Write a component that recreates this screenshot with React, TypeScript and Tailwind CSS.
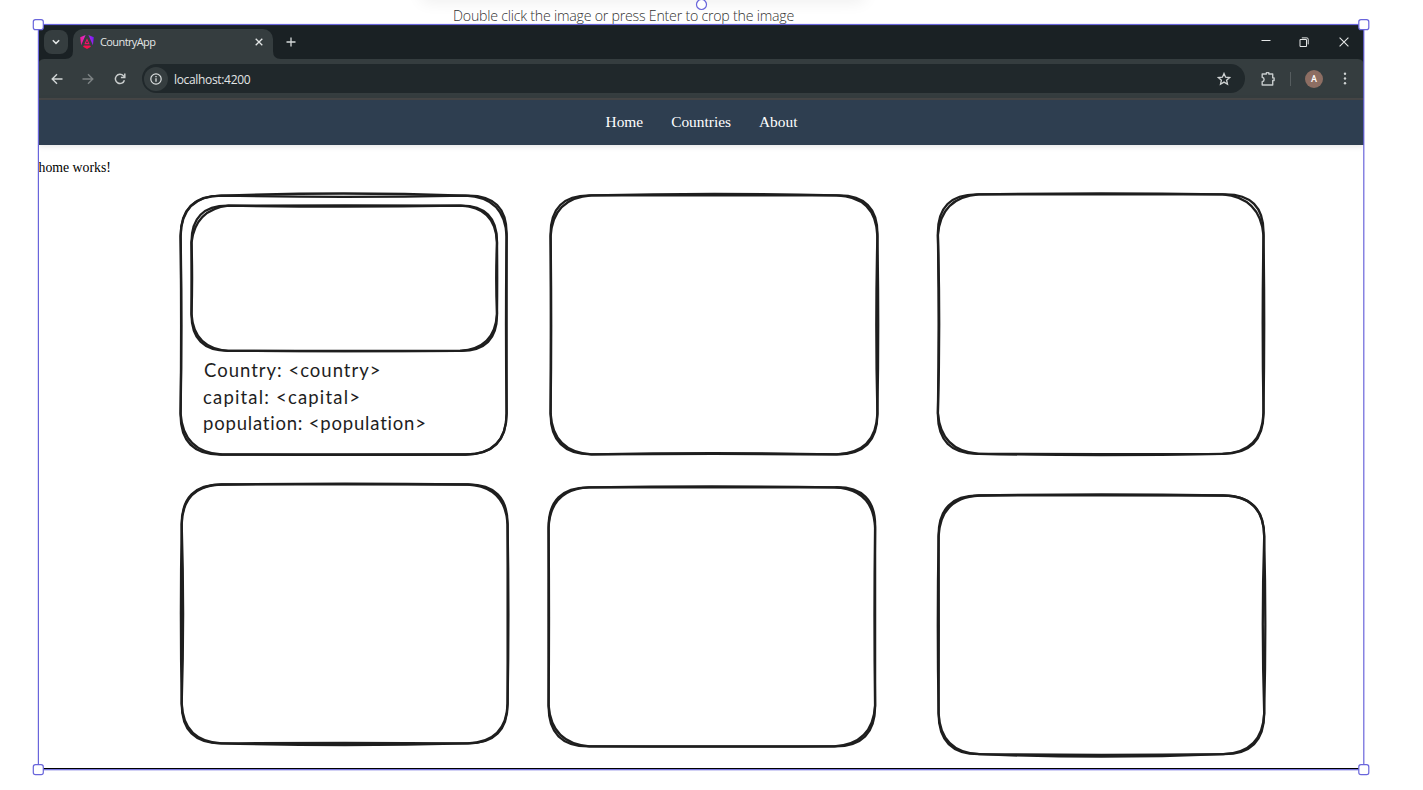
import React from "react";

type Quad = [number, number, number, number];
type Stroke = { sides: Quad; corners: Quad };
type Sketch = {
  left: number;
  top: number;
  right: number;
  bottom: number;
  radius: number;
  strokes: [Stroke, Stroke];
};

// Sides run top, right, bottom, left; corners run TL, TR, BR, BL. Positive values push outwards.
const sketches: Sketch[] = [
  { left: 180.6, top: 195.6, right: 506.6, bottom: 454.5, radius: 41, strokes: [
    { sides: [2.1, -0.6, 0, -0.5], corners: [0.3, 1.6, 0, 0.8] },
    { sides: [-1.2, 0, 0.4, -0.8], corners: [-0.3, -1.6, -0.4, -2.6] } ] },
  { left: 191.5, top: 205.7, right: 497, bottom: 350.8, radius: 37, strokes: [
    { sides: [0.3, -0.8, 0.2, -0.6], corners: [0.4, 0.6, 0.6, 0.3] },
    { sides: [-0.9, 0.2, 0.4, 0], corners: [-3.8, -1.2, -2, -2.2] } ] },
  { left: 550.6, top: 195.4, right: 877.4, bottom: 454.4, radius: 41, strokes: [
    { sides: [1.6, 0.8, -0.5, -0.6], corners: [1.2, 1.4, 0.4, 0.3] },
    { sides: [0.1, -1.1, -1.3, -0.2], corners: [-2.4, -1.2, -1.2, -2.2] } ] },
  { left: 937.9, top: 194.4, right: 1263.5, bottom: 453.8, radius: 41, strokes: [
    { sides: [1.1, 0.7, 1.3, -1.3], corners: [1.2, 1.6, 0.2, 0.8] },
    { sides: [0, -0.8, 0.3, -0.7], corners: [-2.8, -3.2, -1.2, -2.8] } ] },
  { left: 181.7, top: 484.5, right: 507.6, bottom: 743.4, radius: 40, strokes: [
    { sides: [0.9, 0.8, 1.7, 0.8], corners: [0.2, 0.3, 0.2, 0.3] },
    { sides: [0.1, 0, -0.6, -1.4], corners: [-0.8, -2, -1, -1.6] } ] },
  { left: 548.6, top: 487.3, right: 875.1, bottom: 746.4, radius: 41, strokes: [
    { sides: [0.9, -0.6, 0.3, 0.1], corners: [0.6, 1.4, 0.6, 0.6] },
    { sides: [-0.1, 0, 0, -0.4], corners: [-1.4, -1.4, -2.2, -2.8] } ] },
  { left: 938.6, top: 495.5, right: 1264.2, bottom: 754.2, radius: 41, strokes: [
    { sides: [1.1, 1.1, 2.5, 0.8], corners: [0.6, 0.1, 0.3, 0.3] },
    { sides: [0.1, -1.4, 0.6, -0.2], corners: [-1.8, -0.4, -1.6, -1.8] } ] },
];

function strokePath(w: number, h: number, r: number, pad: number, { sides: s, corners: c }: Stroke) {
  const l = pad;
  const t = pad;
  const R = pad + w;
  const b = pad + h;
  const cx = pad + w / 2;
  const cy = pad + h / 2;
  return [
    `M${l + r} ${t}`,
    `Q${cx} ${t - 2 * s[0]} ${R - r} ${t}`,
    `Q${R + c[1]} ${t - c[1]} ${R} ${t + r}`,
    `Q${R + 2 * s[1]} ${cy} ${R} ${b - r}`,
    `Q${R + c[2]} ${b + c[2]} ${R - r} ${b}`,
    `Q${cx} ${b + 2 * s[2]} ${l + r} ${b}`,
    `Q${l - c[3]} ${b + c[3]} ${l} ${b - r}`,
    `Q${l - 2 * s[3]} ${cy} ${l} ${t + r}`,
    `Q${l - c[0]} ${t - c[0]} ${l + r} ${t}Z`,
  ].join("");
}

function SketchBox({ sketch }: { sketch: Sketch }) {
  const pad = 6;
  const w = sketch.right - sketch.left;
  const h = sketch.bottom - sketch.top;
  const x = Math.floor(sketch.left) - pad;
  const y = Math.floor(sketch.top) - pad;
  return (
    <svg
      className="absolute"
      style={{ left: x, top: y }}
      width={Math.ceil(w) + pad * 2}
      height={Math.ceil(h) + pad * 2}
      fill="none"
      stroke="#1e1e1e"
      strokeWidth="2.3"
      strokeLinejoin="round"
    >
      <g transform={`translate(${sketch.left - pad - x} ${sketch.top - pad - y})`}>
        {sketch.strokes.map((s, i) => (
          <path key={i} d={strokePath(w, h, sketch.radius, pad, s)} />
        ))}
      </g>
    </svg>
  );
}

function AngularLogo() {
  return (
    <svg width="14" height="14" viewBox="0 0 14 14">
      <defs>
        <linearGradient id="ng" gradientUnits="userSpaceOnUse" x1="0" y1="7" x2="14" y2="3">
          <stop offset="0" stopColor="#f0188c" />
          <stop offset="0.45" stopColor="#e02ad0" />
          <stop offset="1" stopColor="#6a1cff" />
        </linearGradient>
      </defs>
      <path d="M5.6 0 0.2 2.2 1.1 10.2 5.6 0ZM8.4 0 12.9 10.2 13.8 2.2 8.4 0Z" fill="url(#ng)" />
      <path d="M7 3.2 4.3 9.2h5.4L7 3.2Zm0 2.6 1 2.1H6l1-2.1Z" fill="#ee1266" fillRule="evenodd" />
      <path d="M3.8 10.4h6.4l.7 1.4L7 13.9l-3.9-2.1.7-1.4Z" fill="#f5114f" />
    </svg>
  );
}

function TabStrip() {
  return (
    <div className="flex h-[35px] items-end bg-[#1a2124]">
      <div className="flex h-[35px] w-[35px] items-center pl-[6px]">
        <div className="flex size-6 items-center justify-center rounded-lg bg-[#353d3f]">
          <svg width="8" height="6" viewBox="0 0 8 6" fill="none" stroke="#e3e6e6" strokeWidth="1.5">
            <path d="m.8 1.2 3.2 3.2 3.2-3.2" />
          </svg>
        </div>
      </div>
      <div className="relative flex h-[30px] w-[200px] items-center rounded-t-[10px] bg-[#353d3f] pb-[5px] pl-[7px]">
        <svg className="absolute bottom-0 -left-2" width="8" height="8">
          <path d="M8 0v8H0q8 0 8-8Z" fill="#353d3f" />
        </svg>
        <svg className="absolute -right-2 bottom-0" width="8" height="8">
          <path d="M0 0v8h8q-8 0-8-8Z" fill="#353d3f" />
        </svg>
        <AngularLogo />
        <span className="ml-[6px] flex-1 font-['Open_Sans',sans-serif] text-[11px] leading-none tracking-[-0.6px] text-[#e3e6e6]">
          CountryApp
        </span>
        <svg className="mr-[10px]" width="8" height="8" viewBox="0 0 8 8" stroke="#e3e6e6" strokeWidth="1.3">
          <path d="m.7.7 6.6 6.6M7.3.7.7 7.3" />
        </svg>
      </div>
      <div className="flex h-[35px] flex-1 items-center pl-[13px]">
        <svg width="10" height="10" viewBox="0 0 10 10" stroke="#d5d9d9" strokeWidth="1.3">
          <path d="M5 .5v9M.5 5h9" />
        </svg>
      </div>
      <div className="flex h-[33px] items-center pr-[15px] pb-[2px]">
        <svg width="10" height="10" viewBox="0 0 10 10" stroke="#e5e7e7" strokeWidth="1">
          <path d="M.5 3.5h9" />
        </svg>
        <svg className="ml-[28px]" width="10" height="10" viewBox="0 0 10 10" fill="none" stroke="#e5e7e7" strokeWidth="1">
          <path d="M1 2.500h6.500V9.500H1zM2.800.9h5.100Q9.200.9 9.200 2.200v5.200" />
        </svg>
        <svg className="ml-[30px]" width="10" height="10" viewBox="0 0 10 10" stroke="#e5e7e7" strokeWidth="1.1">
          <path d="m.6.6 8.8 8.8M9.4.6.6 9.4" />
        </svg>
      </div>
    </div>
  );
}

function Toolbar() {
  return (
    <div className="bg-[#1a2124]">
      <div className="flex h-[39px] items-center rounded-t-[6px] bg-[#353d3f] pl-[13px]">
        <svg width="12" height="12" viewBox="0 0 12 12" fill="none" stroke="#d2d6d6" strokeWidth="1.4">
          <path d="M11.5 6H1.5M6 1.2 1.2 6 6 10.8" />
        </svg>
        <svg className="ml-[19px]" width="12" height="12" viewBox="0 0 12 12" fill="none" stroke="#7d8384" strokeWidth="1.4">
          <path d="M.5 6h10M6 1.2 10.8 6 6 10.8" />
        </svg>
        <svg className="ml-[20px]" width="12" height="12" viewBox="0 0 12 12" fill="none" stroke="#c9cdcd" strokeWidth="1.5">
          <path d="M10.4 7.2A4.6 4.6 0 1 1 9.4 2.8L10.6 4" />
          <path d="M10.8.6v3.9H6.9" />
        </svg>
        <div className="ml-[16px] flex h-[29px] w-[1103px] items-center rounded-full bg-[#20282b] pl-[2px]">
          <div className="flex size-6 items-center justify-center rounded-full bg-[#353d3f]">
            <svg width="12" height="12" viewBox="0 0 12 12" fill="none" stroke="#dadede" strokeWidth="1.2">
              <circle cx="6" cy="6" r="5.2" />
              <path d="M6 5.3v3.4M6 3v1.3" strokeWidth="1.3" />
            </svg>
          </div>
          <span className="mt-[2px] ml-[6px] flex-1 font-['Open_Sans',sans-serif] text-[12px] leading-none tracking-[-0.33px] text-[#e3e6e6]">
            localhost:4200
          </span>
          <svg className="mr-[14px]" width="14" height="14" viewBox="0 0 14 14" fill="none" stroke="#cfd3d3" strokeWidth="1.3">
            <path d="m7 1.5 1.6 3.7 4 .4-3 2.6.9 4L7 10.1l-3.500 2.100.9-4-3-2.600 4-.4L7 1.500Z" />
          </svg>
        </div>
        <svg className="ml-[15px]" width="16" height="16" viewBox="0 0 16 16" fill="none" stroke="#c5cacb" strokeWidth="1.4">
          <path
            d="M2.2 3h4.2V1.6h2.4V3h3.900v3.900h1.400v2.600h-1.400V14H2.200v-3.300q1.900-.5 1.900-2.300T2.200 6.200Z"
            strokeLinejoin="round"
          />
        </svg>
        <div className="ml-[14px] h-[14px] w-px bg-[#565d5f]" />
        <div className="ml-[14px] flex size-[18px] items-center justify-center rounded-full bg-[#8d6e63] pt-px font-['Roboto',sans-serif] text-[9px] leading-none font-medium text-white">
          A
        </div>
        <svg className="ml-[20px]" width="4" height="13" viewBox="0 0 4 13" fill="#cfd3d3">
          <circle cx="2" cy="1.7" r="1.2" />
          <circle cx="2" cy="6.5" r="1.2" />
          <circle cx="2" cy="11.3" r="1.2" />
        </svg>
      </div>
    </div>
  );
}

function BrowserWindow() {
  return (
    <div className="ml-[38px] flex h-[745px] w-[1326px] flex-col overflow-hidden border-b border-black bg-white">
      <TabStrip />
      <Toolbar />
      <div className="h-[2px] bg-[#474747]" />
      <nav className="flex h-[45px] items-center justify-center gap-[28px] bg-[#2e3e50] pb-[2px] pl-px font-['Liberation_Serif',serif] text-[15.4px] text-white shadow-[0_1px_6px_rgba(0,0,0,0.12)]">
        <a>Home</a>
        <a>Countries</a>
        <a>About</a>
      </nav>
      <p className="mt-[13px] pl-[0.5px] font-['Liberation_Serif',serif] text-[13.8px] leading-[19px] text-black">
        home works!
      </p>
    </div>
  );
}

function CardText() {
  return (
    <div className="absolute top-[357px] left-[203px] font-['Lato',sans-serif] text-[18.5px] leading-[26.7px] text-[#1e1e1e]">
      <div className="pl-px tracking-[1px]">Country: &lt;country&gt;</div>
      <div className="tracking-[1.18px]">capital: &lt;capital&gt;</div>
      <div className="tracking-[0.8px]">population: &lt;population&gt;</div>
    </div>
  );
}

function Selection() {
  return (
    <svg className="absolute top-0 left-0" width="1423" height="790" fill="none" stroke="#6965db">
      <rect x="38.4" y="24.5" width="1325.4" height="745.2" strokeWidth="1.2" />
      <g fill="#fff" strokeWidth="1.2">
        <circle cx="701.5" cy="4.5" r="5" />
        <rect x="33.3" y="19.6" width="10" height="10" rx="2.2" />
        <rect x="1358.8" y="19.6" width="10" height="10" rx="2.2" />
        <rect x="33.3" y="764.7" width="10" height="10" rx="2.2" />
        <rect x="1358.8" y="764.7" width="10" height="10" rx="2.2" />
      </g>
    </svg>
  );
}

export default function App() {
  return (
    <main className="relative h-[790px] w-[1423px] overflow-hidden bg-white">
      <div className="absolute -top-5 left-[420px] h-4 w-[446px] rounded-lg shadow-[0_6px_16px_rgba(0,0,0,0.07)]" />
      <header className="flex h-6 items-end pl-[453px]">
        <span className="font-['Open_Sans',sans-serif] text-[14.2px] leading-[17px] font-light tracking-[-0.23px] whitespace-nowrap text-[#333]">
          Double click the image or press Enter to crop the image
        </span>
      </header>
      <BrowserWindow />
      {sketches.map((s, i) => (
        <SketchBox key={i} sketch={s} />
      ))}
      <CardText />
      <Selection />
    </main>
  );
}
